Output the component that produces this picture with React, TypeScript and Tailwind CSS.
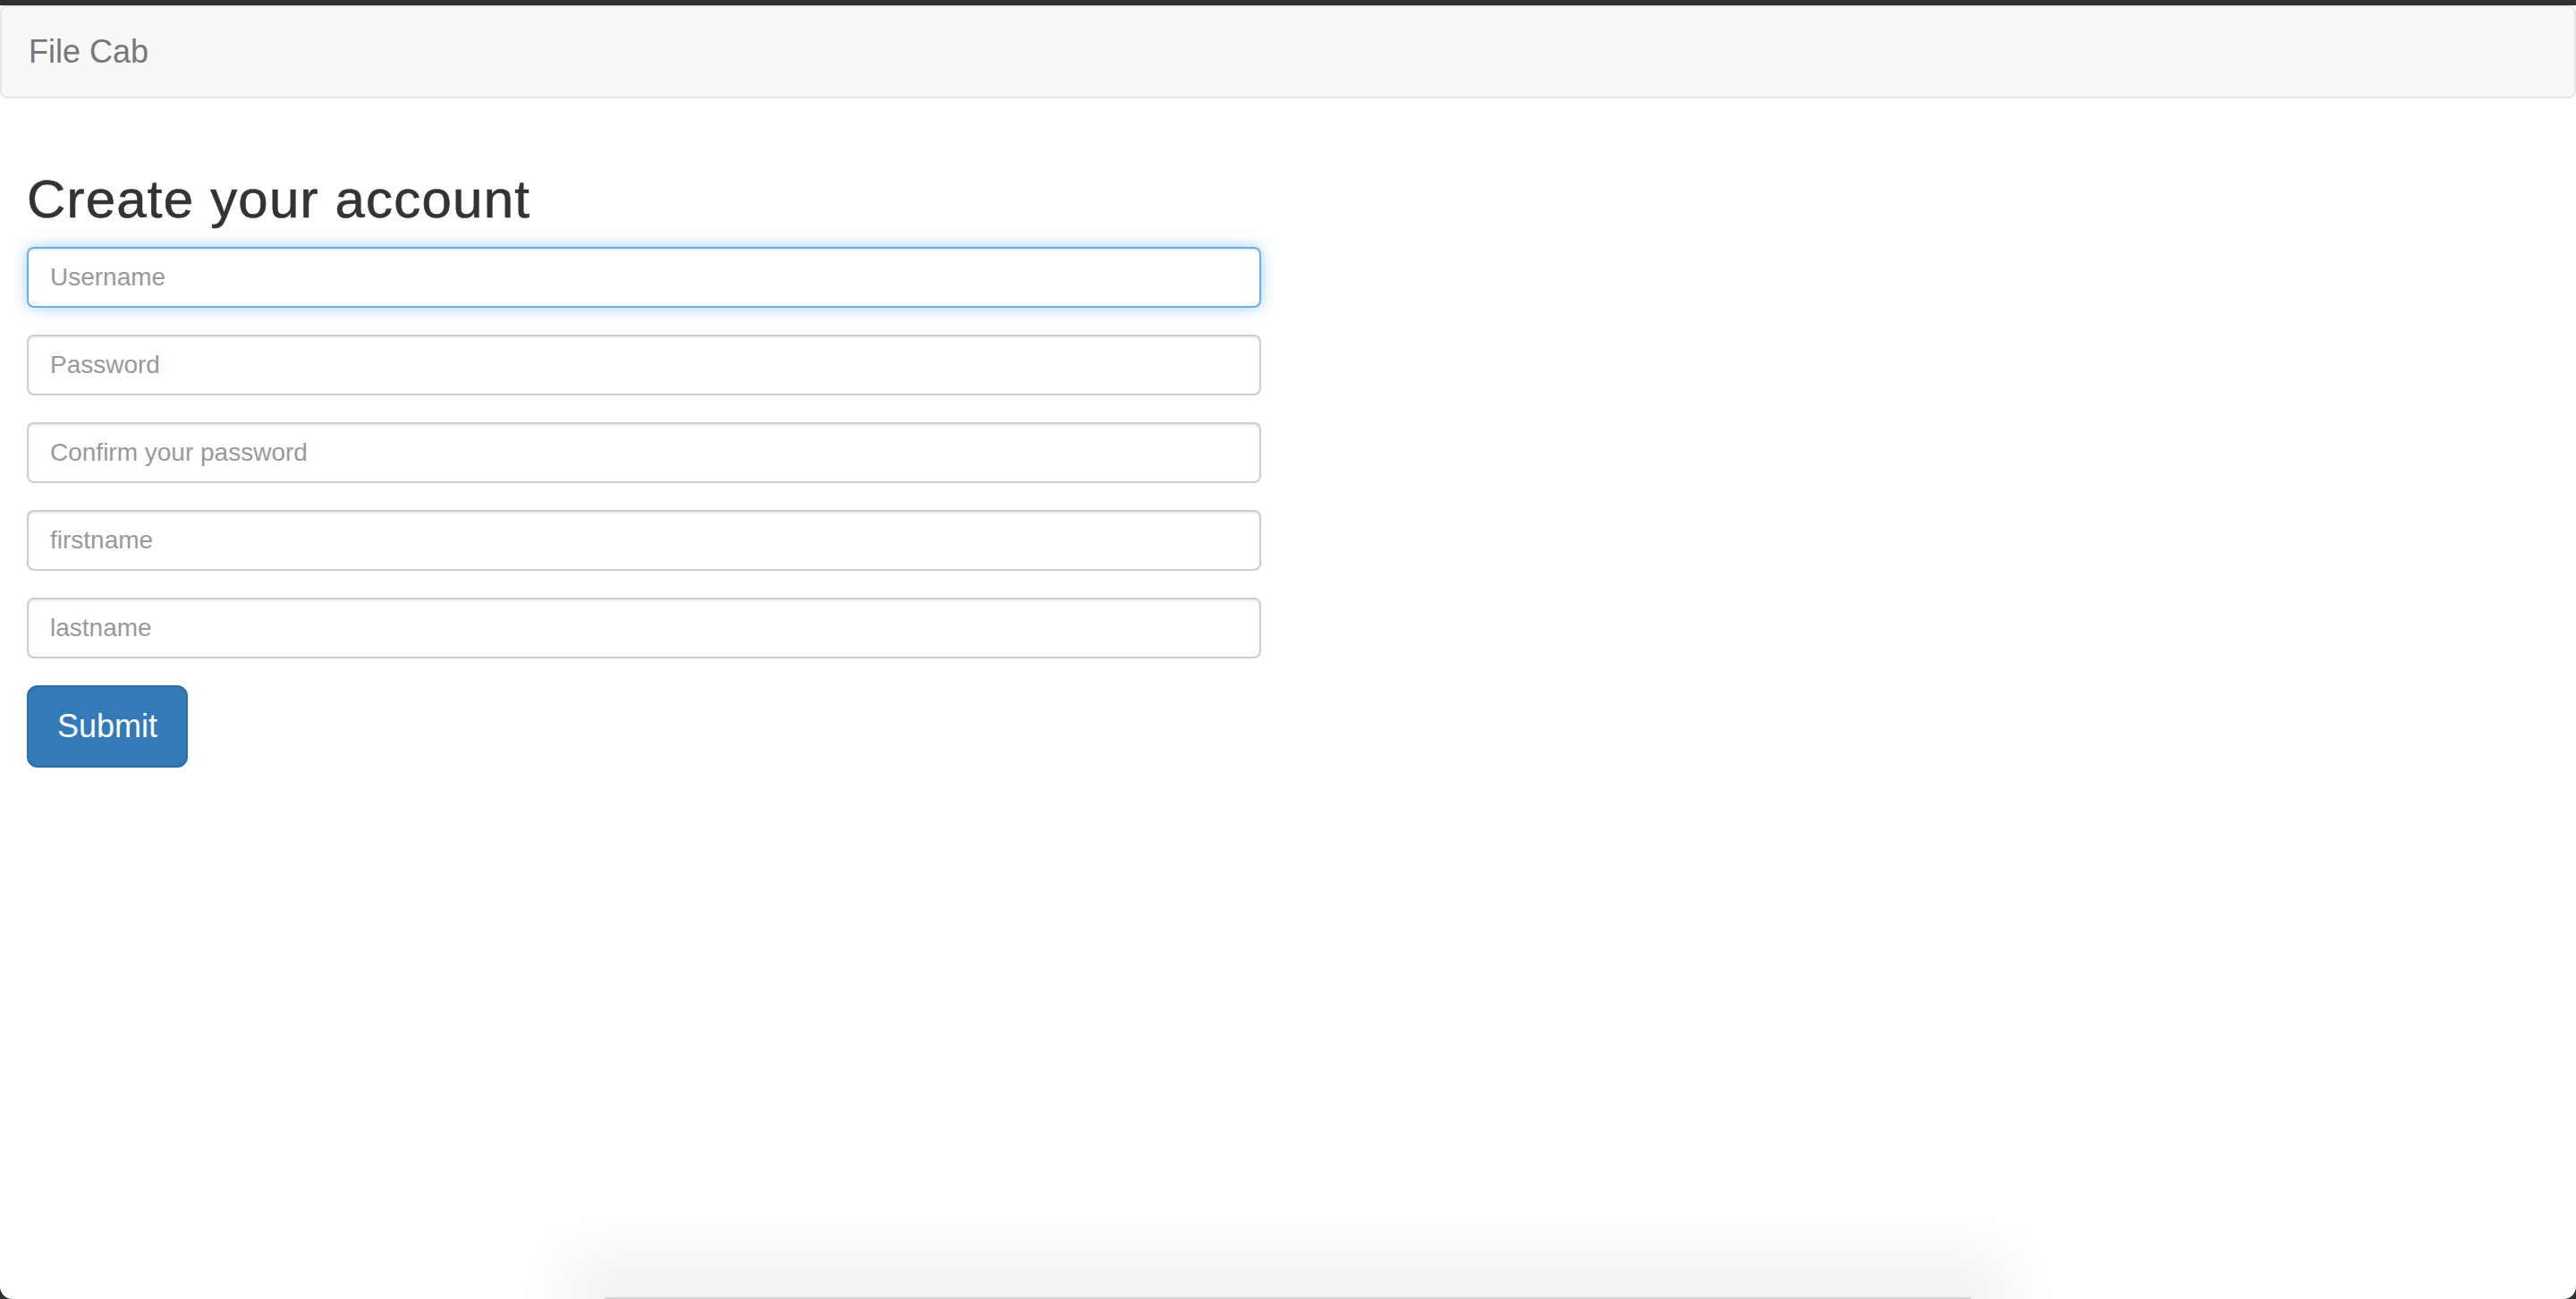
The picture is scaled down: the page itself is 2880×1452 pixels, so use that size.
import React from "react";

const fields = [
  { ph: "Username", type: "text", focus: true },
  { ph: "Password", type: "password" },
  { ph: "Confirm your password", type: "password" },
  { ph: "firstname", type: "text" },
  { ph: "lastname", type: "text" },
];

export default function App() {
  return (
    <div
      className="w-[2880px] h-[1452px] bg-[#2e3134] pt-[6px] overflow-hidden"
      style={{ fontFamily: '"Liberation Sans", Arial, sans-serif' }}
    >
      <div className="relative w-full h-[1446px] bg-white rounded-b-[14px] overflow-hidden">
        <nav className="h-[104px] bg-[#f8f8f8] border-2 border-[#e7e7e7] rounded-[8px] flex items-center">
          <span className="pl-[30px] text-[36px] leading-[40px] text-[#777]">File Cab</span>
        </nav>
        <div className="px-[30px] pt-[80px]">
          <h2 className="mb-[20px] text-[60px] leading-[66px] text-[#333] tracking-[1.2px] [-webkit-text-stroke:0.6px_#333]">
            Create your account
          </h2>
          <form className="w-[1380px]" onSubmit={(e) => e.preventDefault()}>
            {fields.map((f) => (
              <div key={f.ph} className="mb-[30px]">
                <input
                  type={f.type}
                  placeholder={f.ph}
                  className={
                    "block w-full h-[68px] px-[24px] py-[12px] text-[28px] text-[#555] bg-white rounded-[8px] border-2 outline-none placeholder:text-[#999] " +
                    (f.focus
                      ? "border-[#66afe9] shadow-[inset_0_2px_2px_rgba(0,0,0,0.075),0_0_16px_rgba(102,175,233,0.6)]"
                      : "border-[#ccc] shadow-[inset_0_2px_2px_rgba(0,0,0,0.075)]")
                  }
                />
              </div>
            ))}
            <button
              type="submit"
              className="h-[92px] px-[32px] text-[36px] leading-[48px] text-white bg-[#337ab7] border-2 border-[#2e6da4] rounded-[12px]"
            >
              Submit
            </button>
          </form>
        </div>
        <div className="absolute bottom-0 left-[676px] w-[1527px] h-[2px] bg-[#d6d6d6] shadow-[0_0_70px_40px_rgba(0,0,0,0.07)]" />
      </div>
    </div>
  );
}
